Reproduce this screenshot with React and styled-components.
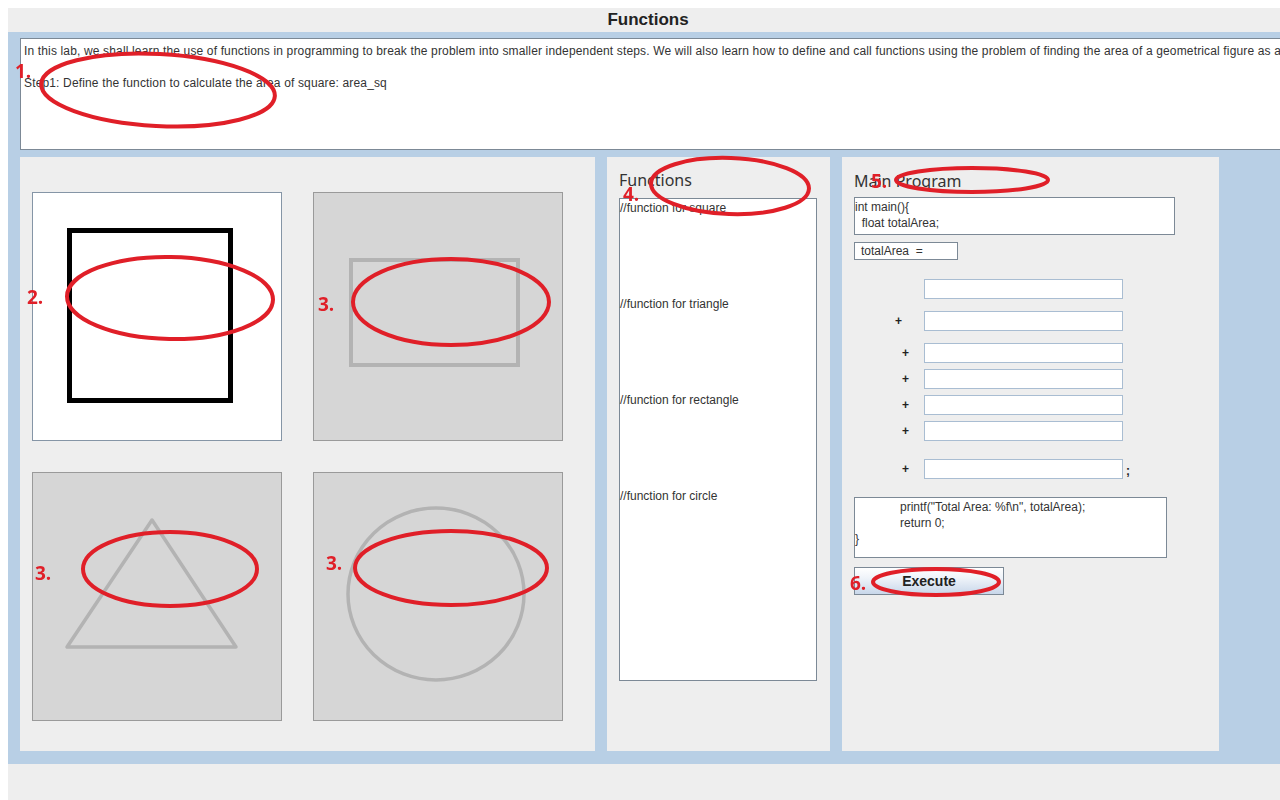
import React from "react";
import styled, { createGlobalStyle } from "styled-components";

const Global = createGlobalStyle`
  html, body { overflow: hidden; }
  body {
    margin: 8px 0 0 8px;
    background: #ffffff;
    font-family: "Liberation Sans", Arial, sans-serif;
  }
`;

const Frame = styled.div`
  width: 1280px;
  height: 800px;
  background: #eeeeee;
  display: flex;
  flex-direction: column;
  overflow: hidden;
`;

const TitleBar = styled.div`
  height: 24px;
  display: flex;
  align-items: center;
  justify-content: center;
  font-weight: bold;
  font-size: 17px;
  color: #222;
`;

const Workspace = styled.div`
  background: #b8cfe5;
  padding: 6px 0 13px 12px;
  display: flex;
  flex-direction: column;
  gap: 7px;
`;

const Intro = styled.div`
  width: 1290px;
  flex-shrink: 0;
  height: 112px;
  box-sizing: border-box;
  background: #fff;
  border: 1px solid #7c8996;
  padding: 4px 3px;
  font-size: 12px;
  letter-spacing: 0.15px;
  line-height: 16px;
  color: #333;
  white-space: nowrap;
  overflow: hidden;
`;

const PanelRow = styled.div`
  display: flex;
  gap: 12px;
  height: 594px;
`;

const Panel = styled.div`
  width: ${(p) => p.$w}px;
  background: #eeeeee;
  box-sizing: border-box;
  padding: ${(p) => p.$pad || "0"};
  display: flex;
  flex-direction: column;
`;

const ShapeGrid = styled.div`
  display: grid;
  grid-template-columns: 250px 250px;
  grid-auto-rows: 249px;
  gap: 31px;
  padding: 35px 12px;
`;

const ShapeCard = styled.div`
  box-sizing: border-box;
  background: ${(p) => (p.$active ? "#ffffff" : "#d6d6d6")};
  border: 1px solid ${(p) => (p.$active ? "#8595a6" : "#9a9a9a")};
  display: flex;
`;

const PanelTitle = styled.div`
  font-family: "Noto Sans", sans-serif;
  font-size: 16px;
  line-height: 22px;
  color: #333;
  margin-bottom: ${(p) => p.$mb}px;
`;

const FuncArea = styled.div`
  width: 198px;
  height: 483px;
  box-sizing: border-box;
  background: #fff;
  border: 1px solid #7c8996;
  padding: 1px 0;
  font-size: 12px;
  line-height: 16px;
  color: #333;
`;

const FuncLine = styled.div`
  height: 96px;
`;

const CodeBox = styled.div`
  width: ${(p) => p.$w}px;
  height: ${(p) => p.$h}px;
  margin-top: ${(p) => p.$mt || 0}px;
  box-sizing: border-box;
  background: #fff;
  border: 1px solid #7c8996;
  padding: 1px 0;
  font-size: 12px;
  line-height: 16px;
  color: #333;
  white-space: pre;
`;

const CodeLine = styled.div`
  padding-left: ${(p) => p.$indent || 0}px;
`;

const AssignBox = styled.div`
  margin-top: 7px;
  width: 104px;
  height: 18px;
  box-sizing: border-box;
  background: #fff;
  border: 1px solid #7c8996;
  padding-left: 6px;
  font-size: 12px;
  line-height: 16px;
  color: #333;
  white-space: pre;
`;

const TermRow = styled.div`
  display: flex;
  align-items: center;
  margin-top: ${(p) => p.$mt}px;
  height: 20px;
`;

const PlusCell = styled.div`
  width: 70px;
  box-sizing: border-box;
  padding-left: ${(p) => p.$x}px;
  font-size: 12px;
  font-weight: bold;
  color: #222;
`;

const TermInput = styled.div`
  width: 199px;
  height: 20px;
  box-sizing: border-box;
  background: #fff;
  border: 1px solid #a9bdd2;
`;

const Semi = styled.span`
  margin-left: 3px;
  margin-top: 4px;
  font-size: 12px;
  font-weight: bold;
  color: #222;
`;

const ExecuteButton = styled.button`
  margin-top: 9px;
  width: 150px;
  height: 28px;
  box-sizing: border-box;
  border: 1px solid #7c8996;
  background: linear-gradient(#ffffff 0%, #eef3f9 40%, #c8d7ea 100%);
  font-family: "Liberation Sans", Arial, sans-serif;
  font-weight: bold;
  font-size: 14px;
  color: #222;
  padding: 0;
`;

const BottomStrip = styled.div`
  flex: 1;
  background: #eeeeee;
`;

const Overlay = styled.svg`
  position: fixed;
  left: 0;
  top: 0;
  width: 1280px;
  height: 800px;
  pointer-events: none;
`;

const shapes = [
  {
    active: true,
    draw: <rect x="37.5" y="38.5" width="161" height="170" fill="none" stroke="#000" strokeWidth="5" />,
  },
  {
    draw: <rect x="38" y="68" width="167" height="105" fill="none" stroke="#b3b3b3" strokeWidth="4" />,
  },
  {
    draw: (
      <polygon
        points="120,48 35,175 204,175"
        fill="none"
        stroke="#b3b3b3"
        strokeWidth="3.5"
        strokeLinejoin="round"
      />
    ),
  },
  {
    draw: <ellipse cx="123" cy="122" rx="88" ry="86" fill="none" stroke="#b3b3b3" strokeWidth="3.5" />,
  },
];

const terms = [
  { mt: 19, plus: null },
  { mt: 12, plus: 41 },
  { mt: 12, plus: 48 },
  { mt: 6, plus: 48 },
  { mt: 6, plus: 48 },
  { mt: 6, plus: 48 },
  { mt: 18, plus: 48, semi: true },
];

const marks = [
  { n: "1.", tx: 15, ty: 78, cx: 158, cy: 90, rx: 117, ry: 36, rot: 3 },
  { n: "2.", tx: 27, ty: 304, cx: 170, cy: 298, rx: 103, ry: 41, rot: 1 },
  { n: "3.", tx: 318, ty: 311, cx: 451, cy: 302, rx: 98, ry: 43, rot: 0 },
  { n: "3.", tx: 35, ty: 580, cx: 170, cy: 569, rx: 87, ry: 37, rot: 0 },
  { n: "3.", tx: 326, ty: 570, cx: 451, cy: 568, rx: 96, ry: 37, rot: 0 },
  { n: "4.", tx: 623, ty: 201, cx: 730, cy: 186, rx: 79, ry: 28, rot: 2 },
  { n: "5.", tx: 871, ty: 188, cx: 972, cy: 180, rx: 76, ry: 12, rot: 0 },
  { n: "6.", tx: 850, ty: 590, cx: 936, cy: 582, rx: 63, ry: 13, rot: 0 },
];

export default function App() {
  return (
    <>
      <Global />
      <Frame>
        <TitleBar>Functions</TitleBar>
        <Workspace>
          <Intro>
            <div>
              In this lab, we shall learn the use of functions in programming to break the problem into smaller
              independent steps. We will also learn how to define and call functions using the problem of finding the
              area of a geometrical figure as a whole.
            </div>
            <div>&nbsp;</div>
            <div>Step1: Define the function to calculate the area of square: area_sq</div>
          </Intro>
          <PanelRow>
            <Panel $w={575}>
              <ShapeGrid>
                {shapes.map((s, i) => (
                  <ShapeCard key={i} $active={s.active}>
                    <svg width="248" height="247" viewBox="1 1 248 247">
                      {s.draw}
                    </svg>
                  </ShapeCard>
                ))}
              </ShapeGrid>
            </Panel>
            <Panel $w={223} $pad="12px 12px 0">
              <PanelTitle $mb={7}>Functions</PanelTitle>
              <FuncArea>
                <FuncLine>//function for square</FuncLine>
                <FuncLine>//function for triangle</FuncLine>
                <FuncLine>//function for rectangle</FuncLine>
                <FuncLine>//function for circle</FuncLine>
              </FuncArea>
            </Panel>
            <Panel $w={377} $pad="13px 12px 0">
              <PanelTitle $mb={5}>Main Program</PanelTitle>
              <CodeBox $w={321} $h={38}>
                <CodeLine>{"int main(){"}</CodeLine>
                <CodeLine>{"  float totalArea;"}</CodeLine>
              </CodeBox>
              <AssignBox>{"totalArea  ="}</AssignBox>
              {terms.map((t, i) => (
                <TermRow key={i} $mt={t.mt}>
                  <PlusCell $x={t.plus || 0}>{t.plus ? "+" : ""}</PlusCell>
                  <TermInput />
                  {t.semi && <Semi>;</Semi>}
                </TermRow>
              ))}
              <CodeBox $w={313} $h={61} $mt={18}>
                <CodeLine $indent={45}>{'printf("Total Area: %f\\n", totalArea);'}</CodeLine>
                <CodeLine $indent={45}>return 0;</CodeLine>
                <CodeLine>{"}"}</CodeLine>
              </CodeBox>
              <ExecuteButton>Execute</ExecuteButton>
            </Panel>
          </PanelRow>
        </Workspace>
        <BottomStrip />
      </Frame>
      <Overlay viewBox="0 0 1280 800">
        {marks.map((m, i) => (
          <g key={i}>
            <ellipse
              cx={m.cx}
              cy={m.cy}
              rx={m.rx}
              ry={m.ry}
              fill="none"
              stroke="#e01f28"
              strokeWidth="4"
              transform={`rotate(${m.rot} ${m.cx} ${m.cy})`}
            />
            <text
              x={m.tx}
              y={m.ty}
              fill="#e01f28"
              fontFamily="'Open Sans', sans-serif"
              fontWeight="700"
              fontSize="19"
            >
              {m.n}
            </text>
          </g>
        ))}
      </Overlay>
    </>
  );
}
